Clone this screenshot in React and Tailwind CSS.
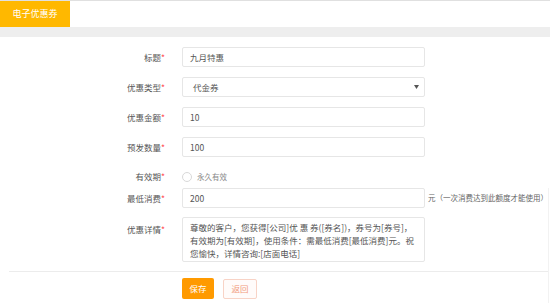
import React from "react";

const F = { fontFamily: '"Noto Sans CJK SC", "Noto Sans", sans-serif' };

function Label({ children, top = false }) {
  return (
    <div className={`w-[166px] shrink-0 text-right text-[8.5px] text-[#555] pr-[1px] ${top ? "pt-[6px]" : ""}`}>
      {children}
      <span className="text-[#ff4d4f]">*</span>
    </div>
  );
}

function Input({ value }) {
  return (
    <div className="ml-[16px] w-[243px] h-[20px] border border-[#e6e6e6] rounded-[2px] flex items-center pl-[7px] text-[8.5px] text-[#555]">
      {value}
    </div>
  );
}

export default function App() {
  return (
    <div className="w-[550px] h-[303px] overflow-hidden bg-white" style={F}>
      <div className="h-[27px] border-t border-[#e0e0e0] flex">
        <div className="w-[70px] h-[26px] bg-[#ffb800] text-white text-[9px] flex items-center justify-center">
          电子优惠券
        </div>
      </div>
      <div className="h-[10px] bg-[#eeeeee]" />

      <div className="flex flex-col">
        <div className="flex items-center mt-[10px]">
          <Label>标题</Label>
          <Input value="九月特惠" />
        </div>
        <div className="flex items-center mt-[10px]">
          <Label>优惠类型</Label>
          <div className="ml-[16px] w-[243px] h-[20px] border border-[#e6e6e6] rounded-[2px] flex items-center justify-between pl-[10px] pr-[5px] text-[8.5px] text-[#555]">
            <span>代金券</span>
            <svg width="5" height="4" viewBox="0 0 5 4">
              <path d="M0 0 H5 L2.5 4 Z" fill="#555" />
            </svg>
          </div>
        </div>
        <div className="flex items-center mt-[10px]">
          <Label>优惠金额</Label>
          <Input value="10" />
        </div>
        <div className="flex items-center mt-[10px]">
          <Label>预发数量</Label>
          <Input value="100" />
        </div>
        <div className="flex items-center mt-[10px] h-[19px]">
          <Label>有效期</Label>
          <div className="ml-[16px] flex items-center">
            <span className="w-[10px] h-[10px] rounded-full border border-[#d9d9d9] bg-white" />
            <span className="ml-[5px] text-[7.5px] text-[#888]">永久有效</span>
          </div>
        </div>

        <div className="flex flex-col border-r border-[#f2f2f2] mr-[1px] mt-[2px]">
          <div className="flex items-center">
            <Label>最低消费</Label>
            <Input value="200" />
            <span className="ml-[3px] text-[7.5px] text-[#666]">元（一次消费达到此额度才能使用）</span>
          </div>
          <div className="flex items-start mt-[9px]">
            <Label top>优惠详情</Label>
            <div className="ml-[16px] w-[243px] h-[45px] border border-[#e6e6e6] rounded-[2px] pl-[7px] pt-[3px] text-[8.5px] leading-[13px] text-[#555] whitespace-nowrap">
              尊敬的客户，您获得[公司]优 惠 券([券名])，券号为[券号]，
              <br />
              有效期为[有效期]，使用条件：需最低消费[最低消费]元。祝
              <br />
              您愉快，详情咨询:[店面电话]
            </div>
          </div>
          <div className="h-[1px] bg-[#ececec] ml-[9px] mt-[9px]" />
          <div className="flex items-center mt-[6px] pl-[182px] pb-[10px]">
            <div className="w-[32px] h-[21px] bg-[#ff9a00] rounded-[2px] text-white text-[8.5px] flex items-center justify-center">
              保存
            </div>
            <div className="ml-[9px] w-[34px] h-[20px] border border-[#f8d3c6] bg-[#fffbfa] rounded-[2px] text-[#f19a7c] text-[8.5px] flex items-center justify-center">
              返回
            </div>
          </div>
        </div>
      </div>
    </div>
  );
}
